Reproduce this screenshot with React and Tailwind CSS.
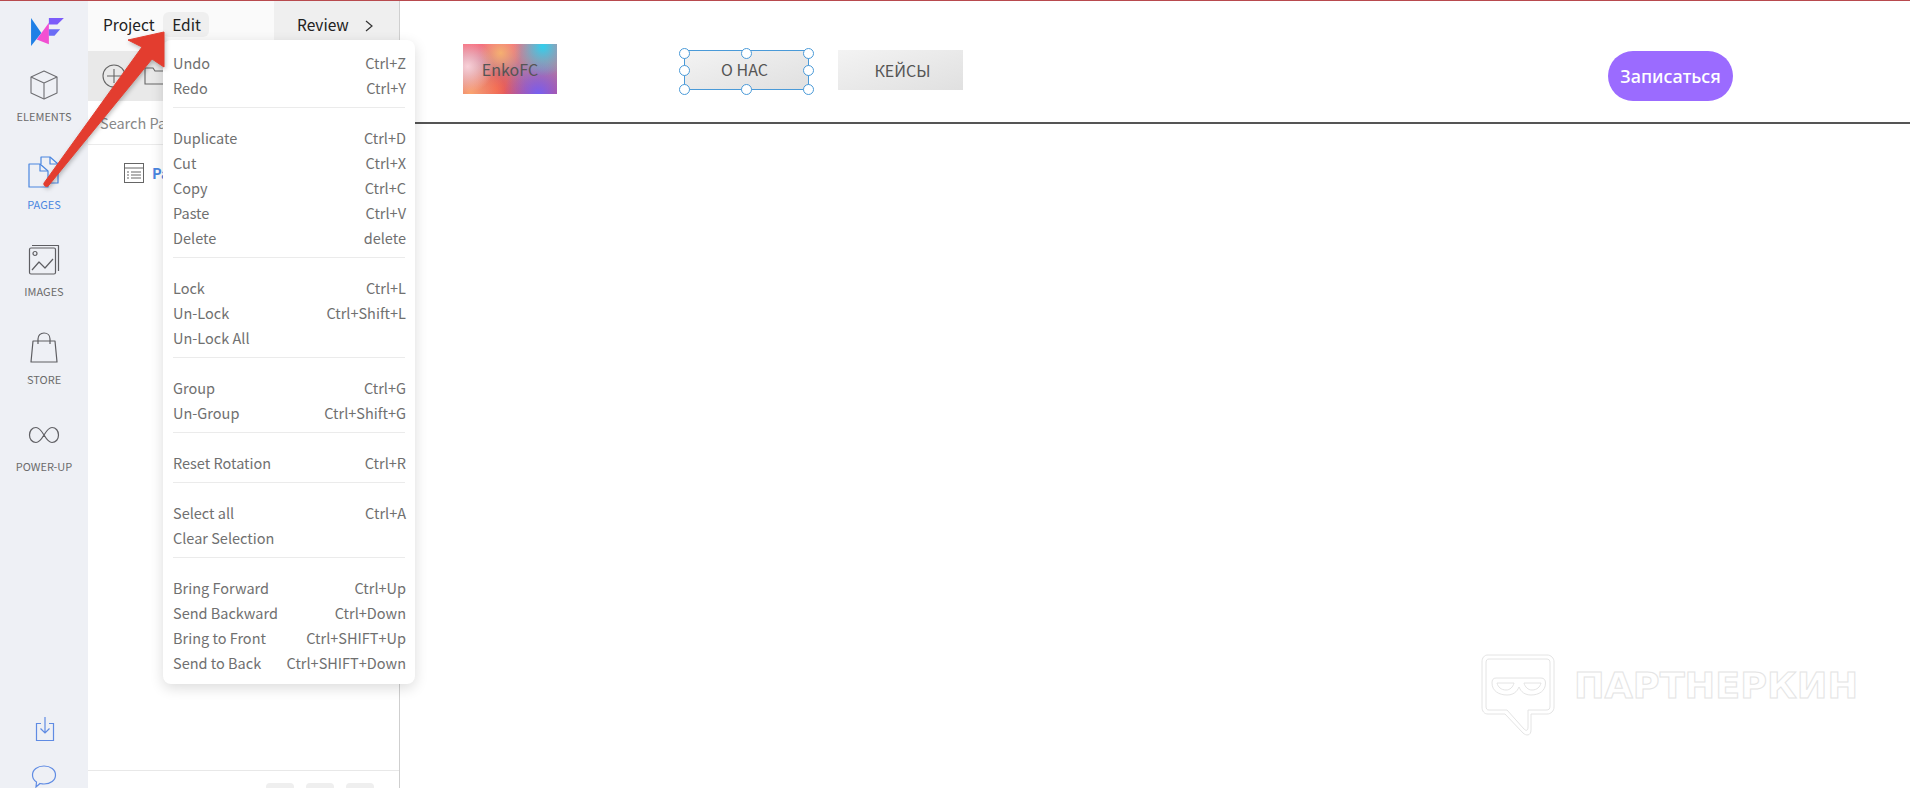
import React from 'react';

const uiFont = 'font-["Noto_Sans_CJK_SC","Source_Sans_Pro",sans-serif]';

const menuGroups = [
  [['Undo', 'Ctrl+Z'], ['Redo', 'Ctrl+Y']],
  [['Duplicate', 'Ctrl+D'], ['Cut', 'Ctrl+X'], ['Copy', 'Ctrl+C'], ['Paste', 'Ctrl+V'], ['Delete', 'delete']],
  [['Lock', 'Ctrl+L'], ['Un-Lock', 'Ctrl+Shift+L'], ['Un-Lock All', '']],
  [['Group', 'Ctrl+G'], ['Un-Group', 'Ctrl+Shift+G']],
  [['Reset Rotation', 'Ctrl+R']],
  [['Select all', 'Ctrl+A'], ['Clear Selection', '']],
  [['Bring Forward', 'Ctrl+Up'], ['Send Backward', 'Ctrl+Down'], ['Bring to Front', 'Ctrl+SHIFT+Up'], ['Send to Back', 'Ctrl+SHIFT+Down']],
];

const Logo = () => (
  <svg width="34" height="30" viewBox="0 0 36 32">
    <polygon points="1,1 12,17 1,31" fill="#1f7fe6" />
    <polygon points="12,17 20,6 20,29 7,24" fill="#f24fd2" />
    <polygon points="20,1 36,1 29,8 20,8" fill="#7c5cfa" />
    <polygon points="20,13 32,13 26,20 20,20" fill="#6a6cf5" />
  </svg>
);

const CubeIcon = () => (
  <svg width="30" height="32" viewBox="0 0 30 32" fill="none" stroke="#6e6e72" strokeWidth="1.1" strokeLinejoin="round">
    <path d="M15 2 L28 8 L28 24 L15 30 L2 24 L2 8 Z" />
    <path d="M2 8 L15 14 L28 8 M15 14 V30" />
  </svg>
);

const PagesIcon = () => (
  <svg width="34" height="34" viewBox="0 0 34 34" fill="none" stroke="#4a86e0" strokeWidth="1.2" strokeLinejoin="round">
    <path d="M2 8 H13 L21 15 V31 H2 Z" />
    <path d="M13 8 V15 H21" />
    <path d="M14 8 V1 H23 L31 8 V27 H21" />
    <path d="M23 1 V8 H31" />
  </svg>
);

const ImagesIcon = () => (
  <svg width="32" height="32" viewBox="0 0 32 32" fill="none" stroke="#5e5e62" strokeWidth="1.2" strokeLinejoin="round">
    <rect x="1.5" y="4" width="26" height="26" rx="1.5" />
    <path d="M4 1.5 H30.5 V27" />
    <circle cx="7" cy="9.5" r="2" />
    <path d="M4 26 L11 18 L17 24 L25 15" />
  </svg>
);

const BagIcon = () => (
  <svg width="28" height="32" viewBox="0 0 28 32" fill="none" stroke="#5e5e62" strokeWidth="1.2" strokeLinejoin="round">
    <path d="M3 9 H25 L27 30 H1 Z" />
    <path d="M8 12 V7 C8 3.5 10.5 1 14 1 C17.5 1 20 3.5 20 7 V12" />
  </svg>
);

const InfinityIcon = () => (
  <svg width="32" height="18" viewBox="0 0 32 18" fill="none" stroke="#5e5e62" strokeWidth="1.2">
    <path d="M16 9 C13 4 11 1.5 8 1.5 C4 1.5 1.5 5 1.5 9 C1.5 13 4 16.5 8 16.5 C11 16.5 13 14 16 9 C19 4 21 1.5 24 1.5 C28 1.5 30.5 5 30.5 9 C30.5 13 28 16.5 24 16.5 C21 16.5 19 14 16 9 Z" />
  </svg>
);

const NavItem = ({ label, icon, active }) => (
  <div className="flex flex-col items-center">
    <div className="flex h-[34px] items-center justify-center">{icon}</div>
    <span className={`mt-[6px] text-[11px] leading-4 ${active ? 'text-[#4a86e0]' : 'text-[#6b6b6b]'}`}>{label}</span>
  </div>
);

const Sidebar = () => (
  <aside className="flex h-full w-[88px] shrink-0 flex-col bg-[#eef0f5]">
    <div className="flex h-[67px] shrink-0 items-start justify-center pl-[6px] pt-[16px]">
      <Logo />
    </div>
    <div className="flex flex-col gap-[31.5px]">
      <NavItem label="ELEMENTS" icon={<CubeIcon />} />
      <NavItem label="PAGES" icon={<PagesIcon />} active />
      <NavItem label="IMAGES" icon={<ImagesIcon />} />
      <NavItem label="STORE" icon={<BagIcon />} />
      <NavItem label="POWER-UP" icon={<InfinityIcon />} />
    </div>
    <div className="mt-[242px] flex flex-col items-center gap-[22px] pl-[2px]">
      <svg width="20" height="26" viewBox="0 0 20 26" fill="none" stroke="#5f8be3" strokeWidth="1.2" className="shrink-0">
        <path d="M6 7.5 H1.5 V24.5 H18.5 V7.5 H14" />
        <path d="M10 1 V17 M5.5 12.5 L10 17 L14.5 12.5" />
      </svg>
      <svg width="26" height="26" viewBox="0 0 26 26" fill="none" stroke="#5f8be3" strokeWidth="1.2" className="-ml-[2px] shrink-0">
        <path d="M13 2 C19.5 2 24.5 5.5 24.5 11 C24.5 16.5 19.5 20 13 20 C11.5 20 10.5 19.8 9 19.5 L5 23 L5.5 18 C3 16.5 1.5 14 1.5 11 C1.5 5.5 6.5 2 13 2 Z" />
      </svg>
    </div>
  </aside>
);

const PagesPanel = () => (
  <section className="flex h-full w-[312px] shrink-0 flex-col border-r border-[#cfcfcf] bg-white">
    <div className="flex h-[50px] shrink-0 items-center bg-[#fafafa] text-[15.5px] leading-5 text-[#222]">
      <span className="-mt-[4px] ml-[15px]">Project</span>
      <span className="-mt-[4px] ml-[9px] flex h-[25px] w-[46px] items-center justify-center rounded-md bg-[#efefef]">Edit</span>
      <div className="ml-auto flex h-full w-[125px] items-center bg-[#efefef] pl-[23px]">
        <span className="-mt-[4px]">Review</span>
        <svg width="10" height="12" viewBox="0 0 10 12" fill="none" stroke="#333" strokeWidth="1.2" className="ml-[15px]">
          <path d="M2 1 L8 6 L2 11" />
        </svg>
      </div>
    </div>
    <div className="flex h-[50px] shrink-0 items-center gap-[18px] bg-[#e9e9e9] pl-[14px]">
      <svg width="24" height="24" viewBox="0 0 24 24" fill="none" stroke="#666" strokeWidth="1.1">
        <circle cx="12" cy="12" r="11" />
        <path d="M12 5 V19 M5 12 H19" />
      </svg>
      <svg width="24" height="20" viewBox="0 0 24 20" fill="none" stroke="#666" strokeWidth="1.1">
        <path d="M1 18 V2 H9 L11 5 H23 V18 Z" />
      </svg>
    </div>
    <div className="flex h-[44px] shrink-0 items-center border-b border-[#ebebeb] pl-[12px] text-[14.5px] text-[#888]">
      Search Pages
    </div>
    <div className="flex items-center pl-[36px] pt-[17px]">
      <svg width="20" height="20" viewBox="0 0 20 20" fill="none" stroke="#666" strokeWidth="1">
        <rect x="0.5" y="0.5" width="19" height="19" />
        <path d="M0.5 5 H19.5 M3 9 H5 M7 9 H17 M3 12 H5 M7 12 H17 M3 15 H5 M7 15 H17" />
      </svg>
      <span className="ml-[8px] text-[14.5px] font-semibold text-[#4a86e0]">Page 1</span>
    </div>
    <div className="mt-auto flex h-[18px] shrink-0 items-start justify-end gap-[12px] border-t border-[#e8e8e8] pr-[25px] pt-[12px]">
      <span className="h-[28px] w-[28px] shrink-0 rounded bg-[#efefef]" />
      <span className="h-[28px] w-[28px] shrink-0 rounded bg-[#efefef]" />
      <span className="h-[28px] w-[28px] shrink-0 rounded bg-[#efefef]" />
    </div>
  </section>
);

const Handle = ({ className }) => (
  <span className={`absolute h-[11px] w-[11px] rounded-full border border-[#4a9ad8] bg-white ${className}`} />
);

const CanvasHeader = () => (
  <header className="flex h-[123px] items-start border-b-2 border-[#555] text-[16px] text-[#555]">
    <div className="ml-[63px] mt-[43px] flex h-[50px] w-[94px] items-center justify-center bg-[#d9708f] bg-[radial-gradient(circle_at_40%_18%,#f5b070_0%,transparent_30%),radial-gradient(circle_at_85%_5%,#2fd0ee_0%,transparent_32%),radial-gradient(circle_at_80%_100%,#7560f2_0%,transparent_38%),radial-gradient(circle_at_5%_45%,#f8d0d8_0%,transparent_28%),radial-gradient(circle_at_8%_100%,#fba56f_0%,transparent_35%),radial-gradient(circle_at_35%_90%,#f2604c_0%,transparent_40%),linear-gradient(180deg,#f76e7e_0%,#b98099_50%,#cf4f7a_100%)]">
      EnkoFC
    </div>
    <div className="relative ml-[127px] mt-[49px] flex h-[40px] w-[125px] items-center justify-center border border-[#4a9ad8] bg-linear-to-br from-[#f3f3f3] to-[#e0e0e0] pb-[2px] pr-[4px]">
      О НАС
      <Handle className="-left-[6px] -top-[3px]" />
      <Handle className="left-[56px] -top-[3px]" />
      <Handle className="-right-[6px] -top-[3px]" />
      <Handle className="-left-[6px] top-[14px]" />
      <Handle className="-right-[6px] top-[14px]" />
      <Handle className="-left-[6px] -bottom-[6px]" />
      <Handle className="left-[56px] -bottom-[6px]" />
      <Handle className="-right-[6px] -bottom-[6px]" />
    </div>
    <div className="ml-[29px] mt-[49px] flex h-[40px] w-[125px] items-center justify-center bg-linear-to-br from-[#f3f3f3] to-[#e0e0e0] pl-[4px]">
      КЕЙСЫ
    </div>
    <button className='ml-[645px] mt-[50px] flex h-[50px] w-[125px] items-center justify-center rounded-[25px] bg-[#9b6bff] font-["Noto_Sans",sans-serif] text-[18px] font-medium text-white'>
      Записаться
    </button>
  </header>
);

const EditMenu = () => (
  <div className="absolute left-[163px] top-[40px] w-[252px] rounded-lg bg-white pb-[9px] pl-[10px] pr-[9px] pt-[10px] text-[14.5px] text-[#707070] shadow-[0_4px_14px_rgba(0,0,0,0.14)]">
    {menuGroups.map((group, i) => (
      <div key={i}>
        {i > 0 && <div className="mb-[17.5px] mr-[1px] mt-[6.5px] h-px bg-[#ebebeb]" />}
        {group.map(([label, shortcut]) => (
          <div key={label} className="flex h-[25px] items-center justify-between">
            <span>{label}</span>
            <span>{shortcut}</span>
          </div>
        ))}
      </div>
    ))}
  </div>
);

// red annotation arrow drawn over the editor
const Arrow = () => (
  <svg width="190" height="200" viewBox="0 0 190 200" className="absolute left-0 top-0 drop-shadow-[1px_2px_2px_rgba(0,0,0,0.25)]">
    <path d="M128 40 L164 32 L164 67 L152 59 L49 185 C47 188 43 186 44 183 L142 47 Z" fill="#e33d2f" stroke="#e33d2f" strokeWidth="1" strokeLinejoin="round" />
  </svg>
);

const Watermark = () => (
  <svg width="380" height="84" viewBox="0 0 380 84" fill="none" stroke="#e4e4e4" strokeWidth="1" className="absolute left-[1481px] top-[654px]">
    <path d="M7 1 H66 C70 1 73 4 73 8 V53 C73 57 70 60 66 60 H50 V76 C50 82 45 82 42 79 L24 60 H7 C3 60 1 57 1 53 V8 C1 4 3 1 7 1 Z" />
    <path d="M8 5 H65 C68 5 69 6 69 9 V52 C69 55 68 56 65 56 H47 V73 C47 77 45 77 43 75 L26 56 H8 C6 56 5 55 5 52 V9 C5 6 6 5 8 5 Z" />
    <path d="M15 24 H60 C63 24 64.5 26 64.5 29 C64.5 37 58 41 50 41 C44 41 40 38 38 33 C36 38 32 41 26 41 C18 41 11 37 11 29 C11 26 12 24 15 24 Z" />
    <path d="M16 29 H33 C32 33 29 36 25 36 C20 36 17 33 16 29 Z M43 29 H60 C59 33 56 36 51 36 C47 36 44 33 43 29 Z" />
    <text x="93" y="44" fontSize="36" fontFamily="DejaVu Sans" fontWeight="700" fill="white" textLength="284" lengthAdjust="spacingAndGlyphs">ПАРТНЕРКИН</text>
  </svg>
);

export default function App() {
  return (
    <div className={`relative flex h-screen flex-col overflow-hidden bg-white ${uiFont}`}>
      <div className="h-px shrink-0 bg-[#b84a4e]" />
      <div className="flex min-h-0 flex-1">
        <Sidebar />
        <PagesPanel />
        <main className="min-w-0 flex-1">
          <CanvasHeader />
        </main>
      </div>
      <EditMenu />
      <Arrow />
      <Watermark />
    </div>
  );
}
